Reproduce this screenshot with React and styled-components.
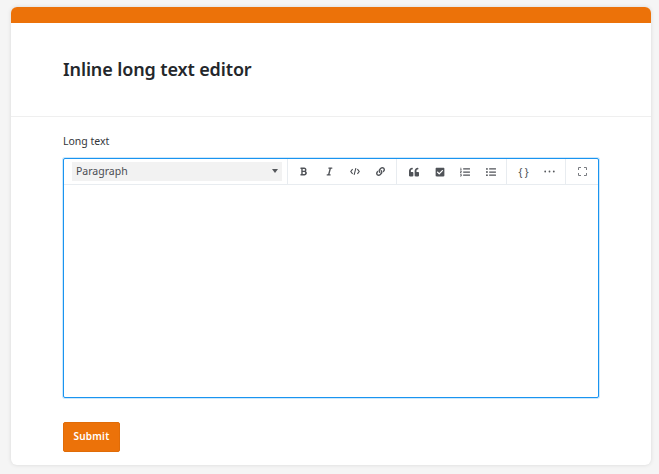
import React from 'react';
import styled, { createGlobalStyle } from 'styled-components';
import { FaBold, FaItalic, FaLink, FaQuoteLeft, FaCheckSquare, FaListOl, FaListUl } from 'react-icons/fa';

const Global = createGlobalStyle`
  html, body { margin: 0; padding: 0; background: #f5f5f5; }
  body { width: 659px; height: 474px; overflow: hidden; font-family: "Noto Sans", "Open Sans", sans-serif; }
`;
const Page = styled.div`padding: 7px 8px 9px 11px;`;
const Card = styled.main`
  width: 640px; height: 458px; box-sizing: border-box; background: #fff; border-radius: 6px;
  overflow: hidden; box-shadow: 0 0 4px rgba(0,0,0,.12); display: flex; flex-direction: column;
`;
const Accent = styled.div`height: 16px; background: #ec7209; flex: none;`;
const Header = styled.header`
  height: 94px; box-sizing: border-box; border-bottom: 1px solid #efefef; padding: 0 52px; flex: none;
  display: flex; align-items: center;
`;
const Title = styled.h1`margin: 0 0 1px; font-size: 18px; letter-spacing: -.12px; line-height: 24px; font-weight: 600; color: #24272b;`;
const Body = styled.section`padding: 15px 52px 0; display: flex; flex-direction: column; align-items: flex-start;`;
const Label = styled.label`font-size: 10.5px; line-height: 18px; color: #33363a; margin-bottom: 8px;`;
const Editor = styled.div`
  width: 536px; height: 240px; box-sizing: border-box; border: 1px solid #1a94f0; border-radius: 2px;
  box-shadow: 0 0 0 1px rgba(26,148,240,.22); display: flex; flex-direction: column; background: #fff;
`;
const Toolbar = styled.div`height: 25px; flex: none; display: flex; border-bottom: 1px solid #e8ecf0; box-sizing: content-box;`;
const SelectWrap = styled.div`flex: 1; display: flex; align-items: center; padding: 3px 5px 3px 8px;`;
const Select = styled.div`
  flex: 1; height: 19px; box-sizing: border-box; background: #f2f2f2; display: flex; align-items: center; justify-content: space-between;
  padding: 0 4px 2px 4px; font-size: 10.5px; color: #4a4d52;
`;
const Caret = styled.span`width: 0; height: 0; border-left: 3.5px solid transparent; border-right: 3.5px solid transparent; border-top: 4.5px solid #55585c;`;
const Group = styled.div`display: flex; align-items: center; border-left: 1px solid #e8ecf0; padding: 0 ${p => p.$pr}px 0 ${p => p.$pl}px;`;
const Tool = styled.span`
  width: 25.5px; height: 25px; display: flex; align-items: center; justify-content: center; color: #505358; font-size: ${p => p.$size || 9}px;
`;
const Brace = styled(Tool)`font-size: 10px; font-weight: 500; letter-spacing: 2.5px; color: #55585c; padding-left: 2px; box-sizing: border-box;`;
const Submit = styled.button`
  margin-top: 24px; width: 57px; height: 30px; border: 1px solid #e06c08; border-radius: 2px; background: #ec7209; color: #fff;
  font: 600 10px "Noto Sans", sans-serif; letter-spacing: .2px; padding: 0 0 2px;
`;

const Code = () => <svg width="10" height="9" viewBox="0 0 10 9" fill="none" stroke="#4a4d52" strokeWidth="1.1"><path d="M2.6 2.2.8 4.5l1.8 2.3M7.4 2.2l1.8 2.3-1.8 2.3M5.9 1.2 4.1 7.8"/></svg>;
const Dots = () => <svg width="11" height="3" viewBox="0 0 11 3" fill="#55585c"><circle cx="1.2" cy="1.5" r=".9"/><circle cx="5.5" cy="1.5" r=".9"/><circle cx="9.8" cy="1.5" r=".9"/></svg>;
const Full = () => <svg width="9" height="9" viewBox="0 0 9 9" fill="none" stroke="#7a7d82" strokeWidth="1"><path d="M.5 3V.5H3M6 .5h2.5V3M8.5 6v2.5H6M3 8.5H.5V6"/></svg>;

export default function App() {
  return (
    <Page>
      <Global />
      <Card>
        <Accent />
        <Header><Title>Inline long text editor</Title></Header>
        <Body>
          <Label>Long text</Label>
          <Editor>
            <Toolbar>
              <SelectWrap><Select>Paragraph<Caret /></Select></SelectWrap>
              <Group $pl={3.5} $pr={3}>
                <Tool><FaBold /></Tool><Tool><FaItalic /></Tool><Tool><Code /></Tool><Tool><FaLink /></Tool>
              </Group>
              <Group $pl={4.5} $pr={2.5}>
                <Tool $size={10}><FaQuoteLeft /></Tool><Tool $size={10}><FaCheckSquare /></Tool><Tool $size={10}><FaListOl /></Tool><Tool $size={10}><FaListUl /></Tool>
              </Group>
              <Group $pl={4} $pr={3}>
                <Brace>{'{}'}</Brace><Tool><Dots /></Tool>
              </Group>
              <Group $pl={3.5} $pr={3}>
                <Tool><Full /></Tool>
              </Group>
            </Toolbar>
          </Editor>
          <Submit>Submit</Submit>
        </Body>
      </Card>
    </Page>
  );
}
